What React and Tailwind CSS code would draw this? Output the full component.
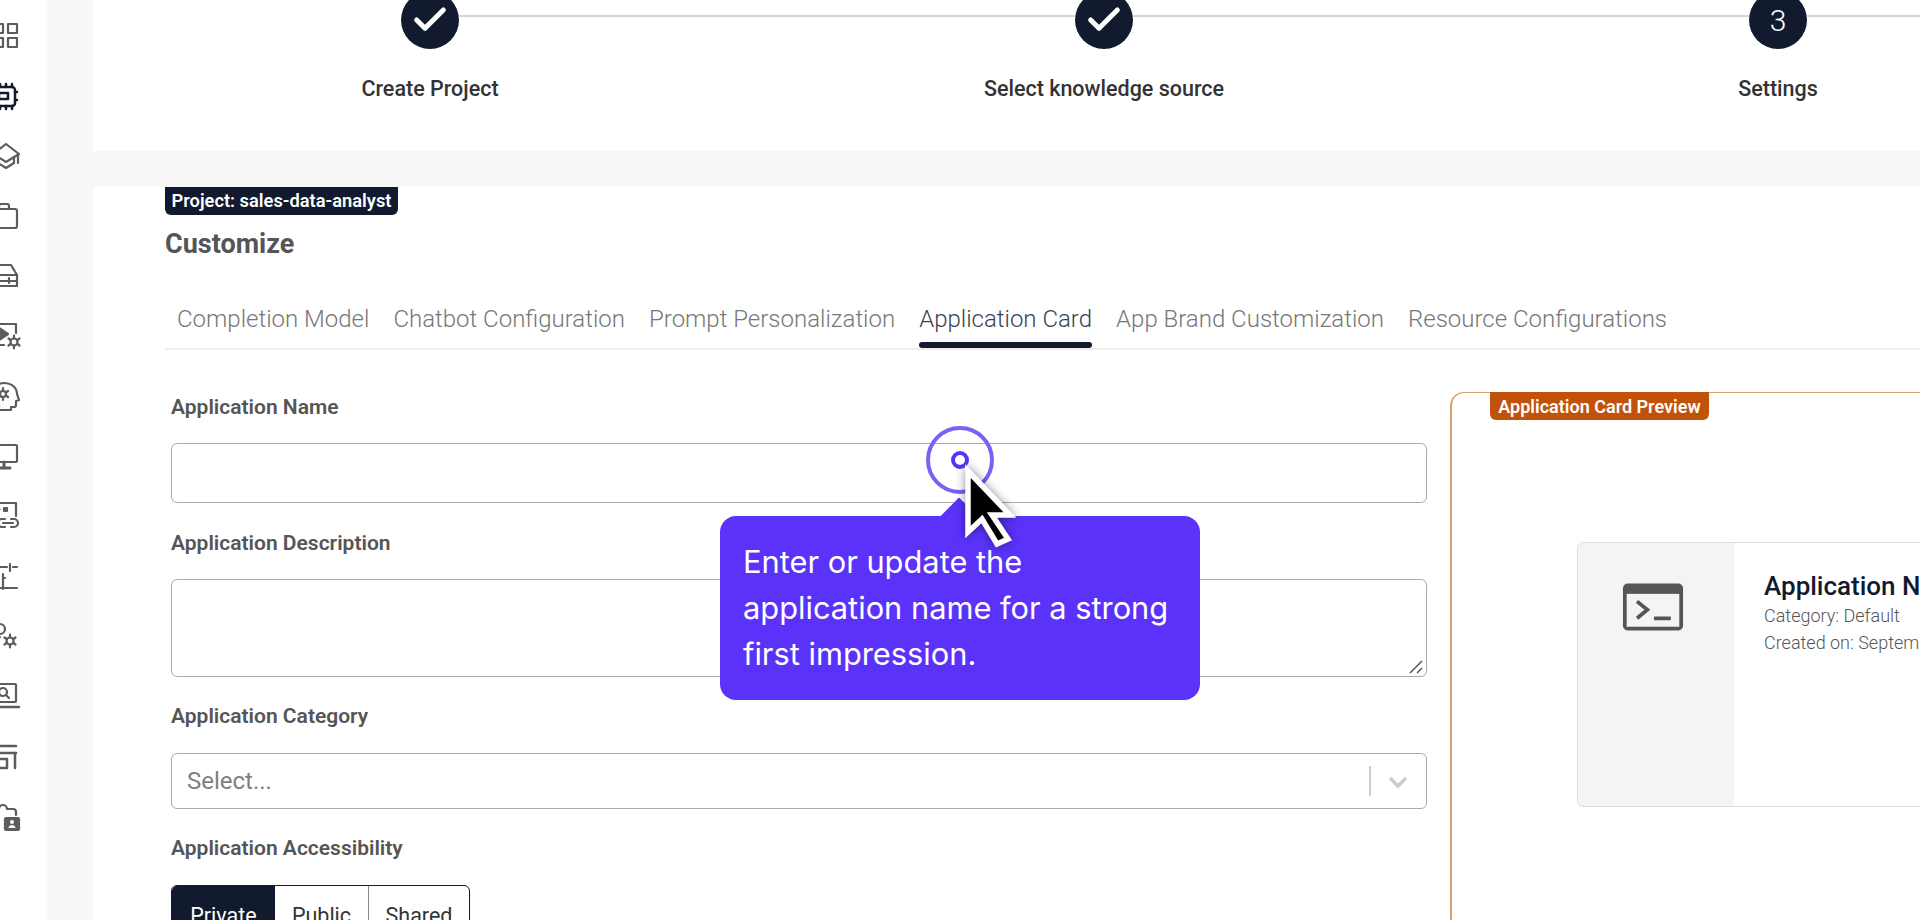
import { Check } from "lucide-react";

const stroke = { fill: "none", stroke: "currentColor", strokeWidth: 2.2, strokeLinejoin: "round", strokeLinecap: "round" };

const gear = (cx, cy, r) => (
  <>
    <circle cx={cx} cy={cy} r={r} />
    <path d={`M${cx} ${cy - r - 3}v3M${cx} ${cy + r}v3M${cx - r - 2} ${cy - r}l2 1.500M${cx + r} ${cy + r - 1.500}l2 1.500M${cx - r - 2} ${cy + r}l2-1.500M${cx + r} ${cy - r + 1.500}l2-1.500`} />
  </>
);

// sidebar icons are drawn on a 30x30 box; the page is cropped so only the right part shows
const navIcons = [
  <g {...stroke}>
    <rect x="4" y="3" width="9" height="9" /><rect x="18" y="3" width="9" height="9" />
    <rect x="4" y="17" width="9" height="9" /><rect x="18" y="17" width="9" height="9" />
  </g>,
  <g {...stroke} strokeWidth="2.500">
    <rect x="5" y="6" width="20" height="19" rx="3" /><rect x="9" y="12" width="9" height="6" />
    <path d="M10 3v3M16 3v3M22 3v3M10 25v3M16 25v3M22 25v3M25 11h2M25 19h2" />
  </g>,
  <g {...stroke}>
    <path d="M16 3 29 13 16 21 3 13Z" /><path d="M8 17v5l8 5 8-5v-5" /><path d="M28 14v8" />
  </g>,
  <g {...stroke}>
    <rect x="2" y="8" width="25" height="19" rx="2" /><path d="M9 8V5a2 2 0 0 1 2-2h6a2 2 0 0 1 2 2v3" />
  </g>,
  <g {...stroke}>
    <path d="M6 4h15l6 10v11H2V14z" /><path d="M2 14h25M2 20h25" /><path d="M19 17v5" />
  </g>,
  <g {...stroke}>
    <path d="M4 3h22v9" /><path d="M3 24h12" strokeDasharray="4 3" />
    <path d="M9 7v12l9-6z" fill="currentColor" />
    {gear(24, 21, 3.500)}
  </g>,
  <g {...stroke}>
    <path d="M14 2c8 0 13 5 13 11l2 6-3 1v4a2 2 0 0 1-2 2h-3v3H9v-6C4 20 2 16 2 13 2 7 7 2 14 2Z" />
    {gear(13, 13, 3)}
  </g>,
  <g {...stroke}>
    <rect x="2" y="4" width="25" height="17" rx="1" /><path d="M14 21v5M8 27h12" strokeWidth="3" />
  </g>,
  <g {...stroke}>
    <path d="M3 2h23v13" /><path d="M4 8h5" strokeWidth="3" /><rect x="14" y="7" width="3" height="3" fill="currentColor" />
    <path d="M15 18h-3a4 4 0 0 0 0 8h3M21 18h3a4 4 0 0 1 0 8h-3M13 22h10" />
  </g>,
  <g {...stroke}>
    <path d="M2 6h15M23 6h4M20 3v7M2 17h5M13 17h2M13 13v15M2 27h25" />
  </g>,
  <g {...stroke}>
    <circle cx="10" cy="8" r="5" /><path d="M2 25c0-6 3-9 8-9" />
    {gear(20, 20, 3.500)}
  </g>,
  <g {...stroke}>
    <rect x="3" y="3" width="23" height="18" rx="1" /><path d="M0 26h29" strokeWidth="2.500" />
    <circle cx="13" cy="11" r="4" /><path d="m16 14 3 3" />
  </g>,
  <g {...stroke} strokeWidth="2.500">
    <path d="M3 5h23M3 12h23" /><path d="M5 12v15h12V18H8M25 12v15" />
  </g>,
  <g {...stroke}>
    <path d="M3 22V8h6a4 4 0 0 1 8 0h6a3 3 0 0 1 3 3v3" />
    <rect x="15" y="17" width="14" height="12" rx="1" fill="currentColor" />
    <circle cx="22" cy="21" r="2" fill="#fff" stroke="none" /><path d="M18.500 27c0-2 2-3 3.500-3s3.500 1 3.500 3" fill="#fff" stroke="none" />
  </g>,
];

const steps = [
  { label: "Create Project", done: true },
  { label: "Select knowledge source", done: true },
  { label: "Settings", done: false },
];

const tabs = [
  "Completion Model",
  "Chatbot Configuration",
  "Prompt Personalization",
  "Application Card",
  "App Brand Customization",
  "Resource Configurations",
];

function Label({ children, className }) {
  return <label className={`block text-[21px] leading-[24px] font-semibold text-[#555555] ${className}`}>{children}</label>;
}

export default function App() {
  return (
    <div className="relative flex h-[920px] w-[1920px] overflow-hidden bg-[#f8f8f8] font-['Roboto',sans-serif]">
      <aside className="w-[47px] shrink-0 overflow-hidden bg-white pt-[6px]">
        {navIcons.map((icon, i) => (
          <div key={i} className={`flex h-[60px] items-center -ml-[10px] ${i === 1 ? "text-[#111a2e]" : "text-[#5c5c5c]"}`}>
            <svg width="30" height="30" viewBox="0 0 30 30" className="shrink-0 overflow-visible">{icon}</svg>
          </div>
        ))}
      </aside>

      <main className="ml-[46px] flex min-w-0 flex-1 flex-col gap-[36px]">
        <section className="flex h-[151px] shrink-0 overflow-hidden bg-white">
          {steps.map((step, i) => (
            <div key={step.label} className="flex w-[674px] shrink-0 flex-col items-center">
              <div className="-mt-[9px] flex w-full items-center">
                <div className={`mb-[8px] h-[2px] flex-1 ${i === 0 ? "" : "bg-[#d4d4d4]"}`} />
                <div className="flex h-[58px] w-[58px] items-center justify-center rounded-full bg-[#111a2e] text-[30px] font-light text-white">
                  {step.done ? <Check size={40} strokeWidth={3} /> : i + 1}
                </div>
                <div className="mb-[8px] h-[2px] flex-1 bg-[#d4d4d4]" />
              </div>
              <div className="mt-[28px] text-[21.500px] leading-[24px] font-medium text-[#333333]">{step.label}</div>
            </div>
          ))}
        </section>

        <section className="flex min-h-0 flex-1 flex-col bg-white pl-[72px]">
          <div className="flex h-[28px] w-[233px] items-center justify-center rounded-b-md bg-[#111a2e] text-[18.300px] font-semibold text-white">
            Project: sales-data-analyst
          </div>
          <h2 className="mt-[14px] text-[27px] leading-[30px] font-bold text-[#555555]">Customize</h2>

          <div className="mt-[41px] flex h-[50px] shrink-0 border-b-2 border-[#eeeeee]">
            {tabs.map((tab) => (
              <div key={tab} className="px-3 pt-[4px] text-[24px] leading-[30px] font-light text-[#777777]">
                <span className={tab === "Application Card" ? "relative block text-[#3a4252]" : "block"}>
                  {tab}
                  {tab === "Application Card" && (
                    <span className="absolute inset-x-0 top-[38px] h-[6px] rounded-full bg-[#111a2e]" />
                  )}
                </span>
              </div>
            ))}
          </div>

          <div className="mt-[42px] flex min-h-0 flex-1 gap-[23px] overflow-hidden">
            <form className="w-[1262px] shrink-0 pl-[6px] pt-[3px]">
              <Label>Application Name</Label>
              <input className="mt-[24px] block h-[60px] w-full rounded-md border border-[#aaaaaa]" />
              <Label className="mt-[28px]">Application Description</Label>
              <div className="relative mt-[24px] h-[98px]">
                <textarea className="block h-full w-full resize-none rounded-md border border-[#aaaaaa]" />
                <svg width="14" height="14" viewBox="0 0 14 14" className="absolute right-[4px] bottom-[3px]">
                  <path d="M1 13 13 1M8 13l5-5" stroke="#555555" strokeWidth="1.500" fill="none" />
                </svg>
              </div>
              <Label className="mt-[27px]">Application Category</Label>
              <div className="mt-[25px] flex h-[56px] w-full items-center rounded-md border border-[#aaaaaa] pl-[15px] text-[24px] text-[#808080]">
                <span className="flex-1">Select...</span>
                <div className="h-[30px] w-[2px] bg-[#cccccc]" />
                <svg width="55" height="30" viewBox="0 0 55 30" className="shrink-0">
                  <path d="M19 12l8 8 8-8" fill="none" stroke="#cccccc" strokeWidth="3.500" />
                </svg>
              </div>
              <Label className="mt-[27px]">Application Accessibility</Label>
              <div className="mt-[25px] flex h-[46px] w-[299px] overflow-hidden rounded-md border border-[#111a2e] text-[21.500px] text-[#333333]">
                <div className="flex w-[103px] justify-center bg-[#111a2e] pt-[14px] text-white">Private</div>
                <div className="flex w-[94px] justify-center border-r border-[#888888] pt-[14px]">Public</div>
                <div className="flex flex-1 justify-center pt-[14px]">Shared</div>
              </div>
            </form>

            <div className="min-w-0 flex-1 rounded-tl-[14px] border-t border-l-2 border-[#d9a070] pl-[125px] pt-[149px]">
              <div className="flex h-[265px] w-[600px] overflow-hidden rounded-md border border-[#dddddd]">
                <div className="flex w-[156px] shrink-0 justify-center bg-[#f4f4f4] pr-[6px] pt-[39px]">
                  <svg width="62" height="50" viewBox="0 0 66 52">
                    <path d="M6 1h54a5 5 0 0 1 5 5v40a5 5 0 0 1-5 5H6a5 5 0 0 1-5-5V6a5 5 0 0 1 5-5Z" fill="#555555" />
                    <rect x="5" y="12" width="56" height="35" fill="#f4f4f4" />
                    <path d="M16 20l11 9-11 9" fill="none" stroke="#555555" strokeWidth="4" />
                    <path d="M34 38h18" stroke="#555555" strokeWidth="4" />
                  </svg>
                </div>
                <div className="pl-[30px] pt-[28px]">
                  <div className="text-[26px] leading-[31px] font-medium whitespace-nowrap text-[#111a2e]">Application Name</div>
                  <div className="text-[18px] leading-[27px] font-light whitespace-nowrap text-[#555555]">Category: Default</div>
                  <div className="text-[18px] leading-[27px] font-light whitespace-nowrap text-[#555555]">Created on: September</div>
                </div>
              </div>
            </div>
          </div>
        </section>
      </main>

      <div className="absolute left-[1490px] top-[392px] flex h-[28px] w-[219px] items-center justify-center rounded-b-md bg-[#c2510a] text-[18px] font-semibold text-white">
        Application Card Preview
      </div>

      {/* guide overlay: pulse ring, tooltip, cursor */}
      <div className="absolute left-[926px] top-[426px] flex h-[68px] w-[68px] items-center justify-center rounded-full border-[4px] border-[#7d5ff5]">
        <div className="h-[18px] w-[18px] rounded-full border-[4px] border-[#5a32fa] bg-white" />
      </div>
      <div className="absolute left-[946px] top-[503px] h-[26px] w-[26px] rotate-45 bg-[#5a32fa]" />
      <div className="absolute left-[720px] top-[516px] h-[184px] w-[480px] rounded-2xl bg-[#5a32fa] px-[23px] py-[23px] font-['Inter',sans-serif] text-[30.800px] leading-[46px] text-white">
        Enter or update the application name for a strong first impression.
      </div>
      <svg width="80" height="105" viewBox="0 0 80 105" className="absolute left-[950px] top-[455px] drop-shadow-[0_0_5px_rgba(0,0,0,0.45)]">
        <path d="M18 16 60 60 42 60 58 84 47 89 32 64 18 77Z" fill="#000000" stroke="#ffffff" strokeWidth="5.500" strokeLinejoin="miter" />
      </svg>
    </div>
  );
}
